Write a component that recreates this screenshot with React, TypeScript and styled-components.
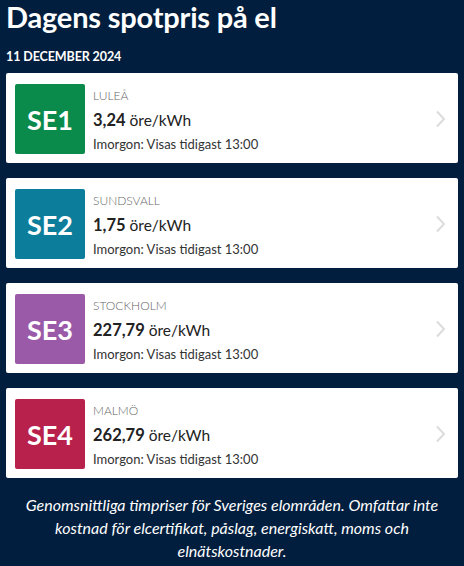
import React from "react";
import styled, { createGlobalStyle } from "styled-components";

const Global = createGlobalStyle`
  html, body { margin: 0; padding: 0; background: #021e3e; }
  body { font-family: Lato, "Noto Sans", sans-serif; }
`;

const Page = styled.div`
  background: #021e3e;
  width: 464px;
  height: 566px;
  box-sizing: border-box;
  padding: 0 6px;
  color: #fff;
  overflow: hidden;
`;

const Title = styled.h1`
  margin: 0;
  font-size: 29px;
  line-height: 34px;
  font-weight: 700;
  letter-spacing: -0.2px;
`;

const DateLine = styled.div`
  margin-top: 15px;
  font-size: 12.5px;
  font-weight: 700;
  line-height: 16px;
  letter-spacing: -0.1px;
`;

const List = styled.div`
  margin-top: 8px;
  display: flex;
  flex-direction: column;
  gap: 15px;
`;

const Card = styled.div`
  background: #fff;
  border-radius: 2px;
  height: 90px;
  box-sizing: border-box;
  padding: 11px 12px 0 9px;
  display: flex;
  align-items: flex-start;
`;

const Badge = styled.div<{ $bg: string }>`
  width: 70px;
  height: 70px;
  background: ${(p) => p.$bg};
  border-radius: 2px;
  color: #fff;
  font-size: 27px;
  font-weight: 700;
  display: flex;
  align-items: center;
  justify-content: center;
  flex-shrink: 0;
`;

const Info = styled.div`
  margin-left: 8px;
  flex: 1;
  display: flex;
  flex-direction: column;
  color: #222;
`;

const City = styled.div`
  font-size: 12px;
  font-weight: 300;
  color: #666;
  line-height: 14px;
  margin-top: 5px;
`;

const Price = styled.div`
  font-size: 15.5px;
  line-height: 20px;
  margin-top: 7px;
  color: #222;
  b { font-weight: 700; font-size: 16.5px; }
`;

const Tomorrow = styled.div`
  font-size: 13px;
  line-height: 18px;
  margin-top: 5px;
  color: #333;
`;

const Chevron = styled.div`
  align-self: center;
  margin-top: -10px;
  display: flex;
`;

const Footer = styled.p`
  margin: 15px 2px 0;
  text-align: center;
  font-style: italic;
  font-size: 16px;
  line-height: 23px;
  color: #fff;
`;

const zones = [
  { code: "SE1", city: "LULEÅ", price: "3,24", bg: "#0a8a4b" },
  { code: "SE2", city: "SUNDSVALL", price: "1,75", bg: "#0c7d9b" },
  { code: "SE3", city: "STOCKHOLM", price: "227,79", bg: "#9b5aa8" },
  { code: "SE4", city: "MALMÖ", price: "262,79", bg: "#b8214b" },
];

export default function App() {
  return (
    <Page>
      <Global />
      <Title>Dagens spotpris på el</Title>
      <DateLine>11 DECEMBER 2024</DateLine>
      <List>
        {zones.map((z) => (
          <Card key={z.code}>
            <Badge $bg={z.bg}>{z.code}</Badge>
            <Info>
              <City>{z.city}</City>
              <Price>
                <b>{z.price}</b> öre/kWh
              </Price>
              <Tomorrow>Imorgon: Visas tidigast 13:00</Tomorrow>
            </Info>
            <Chevron>
              <svg width="11" height="18" viewBox="0 0 11 18">
                <path d="M2 1.5 L9 9 L2 16.5" fill="none" stroke="#dcdcdc" strokeWidth="2" />
              </svg>
            </Chevron>
          </Card>
        ))}
      </List>
      <Footer>
        Genomsnittliga timpriser för Sveriges elområden. Omfattar inte kostnad för elcertifikat, påslag,
        energiskatt, moms och elnätskostnader.
      </Footer>
    </Page>
  );
}
